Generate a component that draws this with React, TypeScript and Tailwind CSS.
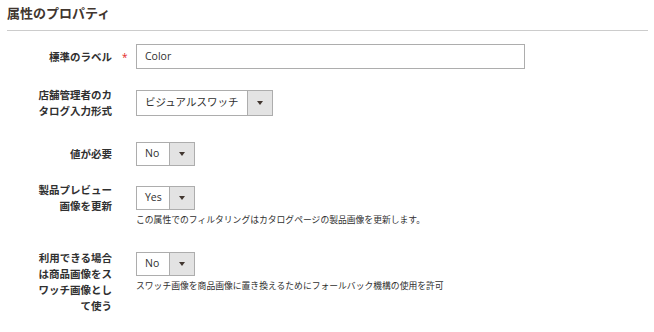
const font = { fontFamily: '"Open Sans", "Noto Sans CJK JP", sans-serif' };

function Arrow() {
  return (
    <svg width="6" height="4" viewBox="0 0 6 4" className="block">
      <path d="M0 0h6L3 4z" fill="#41362f" />
    </svg>
  );
}

function Select({ value, className }: { value: string; className: string }) {
  return (
    <div className={`flex border border-[#adadad] bg-white ${className}`}>
      <div className="flex flex-1 items-center pl-[8px] text-[10.5px] text-[#303030]">
        {value}
      </div>
      <div className="flex w-[25px] items-center justify-center border-l border-[#adadad] bg-[#e3e3e3]">
        <Arrow />
      </div>
    </div>
  );
}

function Row({
  label,
  required,
  children,
  className,
}: {
  label: string;
  required?: boolean;
  children: React.ReactNode;
  className?: string;
}) {
  return (
    <div className={`flex ${className ?? ""}`}>
      <div className="flex w-[105px] shrink-0 justify-end">
        <div className="w-[76px] text-right text-[10.5px] font-semibold leading-[16px] text-[#303030]">
          {label}
        </div>
      </div>
      <div className="flex w-[24px] shrink-0 items-center pl-[10px]">
        {required && (
          <span className="text-[10px] leading-none text-[#e22626]">*</span>
        )}
      </div>
      <div className="flex flex-col">{children}</div>
    </div>
  );
}

export default function App() {
  return (
    <div
      className="h-[332px] w-[654px] bg-white pl-[7px] pr-[6px] pt-[4px]"
      style={font}
    >
      <h2 className="text-[13px] font-bold leading-[18px] text-[#41362f]">
        属性のプロパティ
      </h2>
      <div className="mt-[8px] h-px bg-[#cccccc]" />

      <Row label="標準のラベル" required className="mt-[13px] items-center">
        <div className="flex h-[25px] w-[389px] items-center border border-[#adadad] pl-[8px] text-[10.5px] text-[#303030]">
          Color
        </div>
      </Row>

      <Row label="店舗管理者のカタログ入力形式" className="mt-[18px] items-center">
        <Select value="ビジュアルスワッチ" className="h-[26px] w-[137px]" />
      </Row>

      <Row label="値が必要" className="mt-[23px] items-center">
        <Select value="No" className="h-[24px] w-[59px]" />
      </Row>

      <Row label="製品プレビュー画像を更新" className="mt-[16px]">
        <div className="pt-[4px]">
          <Select value="Yes" className="h-[24px] w-[59px]" />
        </div>
        <p className="mt-[4px] text-[8.8px] leading-[12px] text-[#303030]">
          この属性でのフィルタリングはカタログページの製品画像を更新します。
        </p>
      </Row>

      <Row label="利用できる場合は商品画像をスワッチ画像として使う" className="mt-[24px]">
        <div className="pt-[2px]">
          <Select value="No" className="h-[24px] w-[59px]" />
        </div>
        <p className="mt-[4px] text-[8.8px] leading-[12px] text-[#303030]">
          スワッチ画像を商品画像に置き換えるためにフォールバック機構の使用を許可
        </p>
      </Row>
    </div>
  );
}
